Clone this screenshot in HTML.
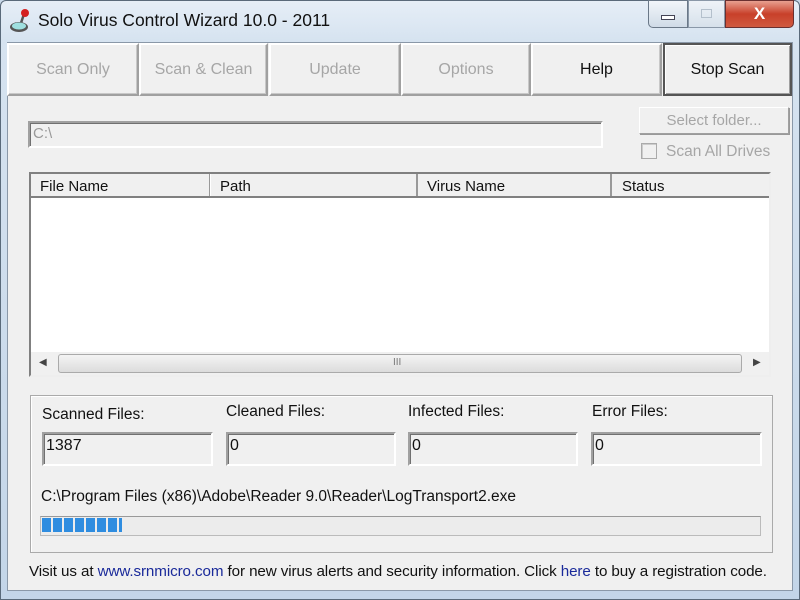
<!DOCTYPE html>
<html><head><meta charset="utf-8"><style>
*{box-sizing:border-box;margin:0;padding:0}
body{width:800px;height:600px;overflow:hidden;background:#c9d9ea;font-family:"Liberation Sans",sans-serif;font-size:15px;position:relative;color:#111}
.a{position:absolute}
.frame{left:0;top:0;width:800px;height:600px;background:linear-gradient(180deg,#e6eef7 0,#d6e3f0 40px,#c3d5e8 100%);border:1px solid #5a6a7a;border-radius:6px 6px 0 0}
.client{left:7px;top:42px;width:786px;height:549px;background:#f0f0f0;border:1px solid #8a98a8}
.btn{top:43px;height:53px;background:#f0f0f0;border:2px solid #a0a0a0;border-top-color:#fff;border-left-color:#fff;display:flex;align-items:center;justify-content:center;font-size:16px;color:#a6a6a6;box-shadow:inset -1px -1px 0 #c8c8c8}
.sunk{border:2px solid #a0a0a0;border-right-color:#fff;border-bottom-color:#fff;box-shadow:inset 1px 1px 0 #707070}
.lbl{font-size:15.5px}
</style></head><body>
<div class="a frame"></div>
<svg class="a" style="left:8px;top:6px" width="24" height="28" viewBox="0 0 24 28"><line x1="13" y1="17" x2="16" y2="8" stroke="#555" stroke-width="2.5"/><circle cx="17" cy="7" r="4" fill="#d42020"/><ellipse cx="11" cy="21" rx="9" ry="5" fill="#555"/><ellipse cx="11" cy="20" rx="7" ry="3.5" fill="#9fe0e0"/></svg>
<div class="a" style="left:38px;top:10px;font-size:17.5px;color:#111">Solo Virus Control Wizard 10.0 - 2011</div>
<div class="a" style="left:648px;top:0;width:40px;height:28px;border:1px solid #6a7888;border-radius:0 0 0 5px;background:linear-gradient(#f2f6fa,#d0dbe7)"><div class="a" style="left:12px;top:14px;width:14px;height:5px;background:#fff;border:1px solid #445"></div></div>
<div class="a" style="left:688px;top:0;width:37px;height:28px;border:1px solid #8a98a8;background:linear-gradient(#eef3f8,#d7e1eb)"><div class="a" style="left:12px;top:8px;width:11px;height:9px;border:1px solid #b4c0cc"></div></div>
<div class="a" style="left:725px;top:0;width:69px;height:28px;border:1px solid #6a3030;border-radius:0 0 5px 0;background:linear-gradient(#e8a090,#c8402a 50%,#d05a40);color:#fff;font-weight:bold;font-size:17px;text-align:center;line-height:26px">X</div>
<div class="a client"></div>
<div class="a btn" style="left:7px;width:132px">Scan Only</div>
<div class="a btn" style="left:139px;width:129px">Scan &amp; Clean</div>
<div class="a btn" style="left:269px;width:132px">Update</div>
<div class="a btn" style="left:401px;width:130px">Options</div>
<div class="a btn" style="left:531px;width:131px;color:#111">Help</div>
<div class="a btn" style="left:663px;width:129px;color:#111;border:2px solid #555;box-shadow:inset 1px 1px 0 #fff,inset -1px -1px 0 #a0a0a0">Stop Scan</div>
<div class="a sunk" style="left:28px;top:121px;width:575px;height:27px;color:#999;padding:2px 3px;font-size:15px">C:\</div>
<div class="a" style="left:639px;top:107px;width:150px;height:27px;border:1px solid #a0a0a0;border-top-color:#fff;border-left-color:#fff;box-shadow:1px 1px 0 #999;color:#a6a6a6;text-align:center;line-height:25px;font-size:15px">Select folder...</div>
<div class="a" style="left:641px;top:143px;width:16px;height:16px;border:1px solid #aaa;box-shadow:inset 1px 1px 0 #ccc"></div>
<div class="a" style="left:666px;top:143px;color:#a6a6a6;font-size:15.5px">Scan All Drives</div>
<div class="a" style="left:29px;top:172px;width:742px;height:205px;background:#fff;border:2px solid #808080;border-right-color:#eee;border-bottom-color:#eee"></div>
<div class="a" style="left:31px;top:174px;width:738px;height:24px;background:#f0f0f0;border-bottom:2px solid #808080"></div>
<div class="a" style="left:40px;top:178px">File Name</div>
<div class="a" style="left:209px;top:174px;width:2px;height:22px;background:#999;border-right:1px solid #fff"></div>
<div class="a" style="left:220px;top:178px">Path</div>
<div class="a" style="left:416px;top:174px;width:2px;height:22px;background:#999"></div>
<div class="a" style="left:427px;top:178px">Virus Name</div>
<div class="a" style="left:610px;top:174px;width:2px;height:22px;background:#999"></div>
<div class="a" style="left:622px;top:178px">Status</div>
<div class="a" style="left:31px;top:352px;width:738px;height:23px;background:#f0f0f0"></div>
<div class="a" style="left:58px;top:354px;width:684px;height:19px;border:1px solid #aaa;border-radius:3px;background:linear-gradient(#f4f4f4,#dcdcdc)"></div>
<div class="a" style="left:39px;top:357px;font-size:10px;color:#444">◀</div>
<div class="a" style="left:753px;top:357px;font-size:10px;color:#444">▶</div>
<div class="a" style="left:393px;top:357px;font-size:10px;color:#777">III</div>
<div class="a" style="left:30px;top:395px;width:743px;height:158px;border:1px solid #aaa;box-shadow:inset 1px 1px 0 #fff"></div>
<div class="a lbl" style="left:42px;top:406px">Scanned Files:</div>
<div class="a lbl" style="left:226px;top:403px">Cleaned Files:</div>
<div class="a lbl" style="left:408px;top:403px">Infected Files:</div>
<div class="a lbl" style="left:592px;top:403px">Error Files:</div>
<div class="a sunk" style="left:42px;top:432px;width:171px;height:34px;padding:3px 2px;font-size:16px">1387</div>
<div class="a sunk" style="left:226px;top:432px;width:170px;height:34px;padding:3px 2px;font-size:16px">0</div>
<div class="a sunk" style="left:408px;top:432px;width:170px;height:34px;padding:3px 2px;font-size:16px">0</div>
<div class="a sunk" style="left:591px;top:432px;width:171px;height:34px;padding:3px 2px;font-size:16px">0</div>
<div class="a" style="left:41px;top:488px;font-size:15.5px">C:\Program Files (x86)\Adobe\Reader 9.0\Reader\LogTransport2.exe</div>
<div class="a" style="left:40px;top:516px;width:721px;height:20px;border:1px solid #bbb;border-top-color:#999;background:#ececec"></div>
<div class="a" style="left:42px;top:518px;width:80px;height:14px;background:repeating-linear-gradient(90deg,#2f8de0 0,#2f8de0 9px,transparent 9px,transparent 11px)"></div>
<div class="a" style="left:29px;top:563px;font-size:15.2px;letter-spacing:-0.1px">Visit us at <span style="color:#1a2a9a">www.srnmicro.com</span> for new virus alerts and security information. Click <span style="color:#1a2a9a">here</span> to buy a registration code.</div>
</body></html>
